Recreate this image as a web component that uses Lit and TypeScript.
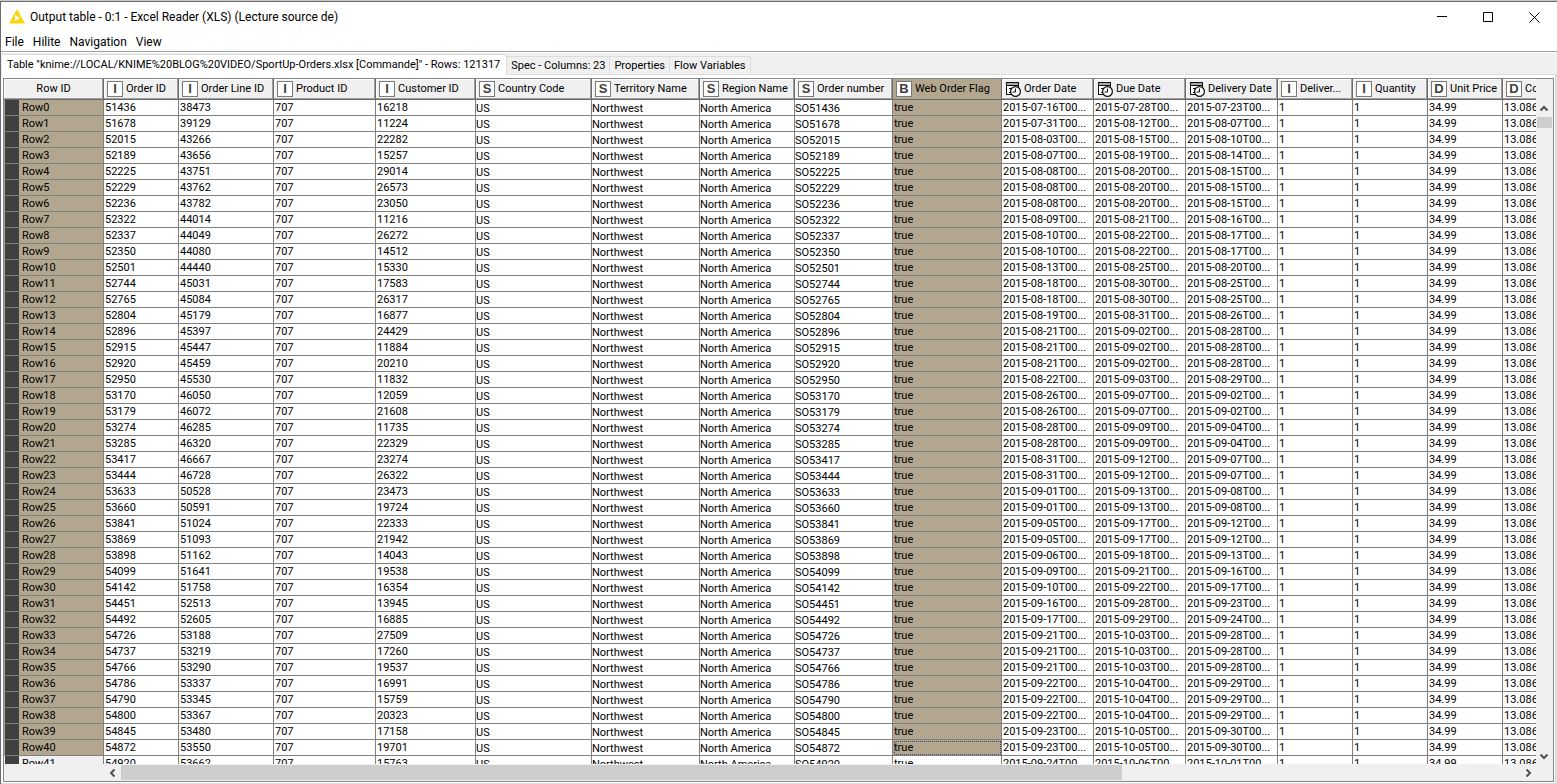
import { LitElement, html, svg, css, nothing } from "lit";
import { customElement } from "lit/decorators.js";
import { classMap } from "lit/directives/class-map.js";

type Kind = "int" | "string" | "bool" | "double" | "date";

interface Column {
  label: string;
  kind: Kind;
  width: number;
  selected?: boolean;
}

const LETTERS: Record<string, string> = { int: "I", string: "S", bool: "B", double: "D" };

const COLUMNS: Column[] = [
  { label: "Order ID", kind: "int", width: 75 },
  { label: "Order Line ID", kind: "int", width: 95 },
  { label: "Product ID", kind: "int", width: 102 },
  { label: "Customer ID", kind: "int", width: 100 },
  { label: "Country Code", kind: "string", width: 116 },
  { label: "Territory Name", kind: "string", width: 108 },
  { label: "Region Name", kind: "string", width: 95 },
  { label: "Order number", kind: "string", width: 98 },
  { label: "Web Order Flag", kind: "bool", width: 109, selected: true },
  { label: "Order Date", kind: "date", width: 92 },
  { label: "Due Date", kind: "date", width: 92 },
  { label: "Delivery Date", kind: "date", width: 92 },
  { label: "Deliver...", kind: "int", width: 75 },
  { label: "Quantity", kind: "int", width: 75 },
  { label: "Unit Price", kind: "double", width: 75 },
  { label: "Co", kind: "double", width: 75 },
];

// order id, order line id, customer id, order date, due date, delivery date
const ORDERS = `
51436 38473 16218 07-16 07-28 07-23
51678 39129 11224 07-31 08-12 08-07
52015 43266 22282 08-03 08-15 08-10
52189 43656 15257 08-07 08-19 08-14
52225 43751 29014 08-08 08-20 08-15
52229 43762 26573 08-08 08-20 08-15
52236 43782 23050 08-08 08-20 08-15
52322 44014 11216 08-09 08-21 08-16
52337 44049 26272 08-10 08-22 08-17
52350 44080 14512 08-10 08-22 08-17
52501 44440 15330 08-13 08-25 08-20
52744 45031 17583 08-18 08-30 08-25
52765 45084 26317 08-18 08-30 08-25
52804 45179 16877 08-19 08-31 08-26
52896 45397 24429 08-21 09-02 08-28
52915 45447 11884 08-21 09-02 08-28
52920 45459 20210 08-21 09-02 08-28
52950 45530 11832 08-22 09-03 08-29
53170 46050 12059 08-26 09-07 09-02
53179 46072 21608 08-26 09-07 09-02
53274 46285 11735 08-28 09-09 09-04
53285 46320 22329 08-28 09-09 09-04
53417 46667 23274 08-31 09-12 09-07
53444 46728 26322 08-31 09-12 09-07
53633 50528 23473 09-01 09-13 09-08
53660 50591 19724 09-01 09-13 09-08
53841 51024 22333 09-05 09-17 09-12
53869 51093 21942 09-05 09-17 09-12
53898 51162 14043 09-06 09-18 09-13
54099 51641 19538 09-09 09-21 09-16
54142 51758 16354 09-10 09-22 09-17
54451 52513 13945 09-16 09-28 09-23
54492 52605 16885 09-17 09-29 09-24
54726 53188 27509 09-21 10-03 09-28
54737 53219 17260 09-21 10-03 09-28
54766 53290 19537 09-21 10-03 09-28
54786 53337 16991 09-22 10-04 09-29
54790 53345 15759 09-22 10-04 09-29
54800 53367 20323 09-22 10-04 09-29
54845 53480 17158 09-23 10-05 09-30
54872 53550 19701 09-23 10-05 09-30
54920 53662 15763 09-24 10-06 10-01`
  .trim()
  .split("\n")
  .map((line) => line.split(" "));

const LAST_SELECTED = 40;

const day = (value: string) => `2015-${value}T00...`;

const toCells = ([order, line, customer, ordered, due, delivered]: string[]) => [
  order, line, "707", customer, "US", "Northwest", "North America", `SO${order}`, "true",
  day(ordered), day(due), day(delivered), "1", "1", "34.99", "13.086",
];

const CHEVRONS: Record<string, string> = {
  up: "M4.5 10.5 8 7l3.5 3.5",
  down: "M4.5 6.5 8 10l3.5-3.5",
  left: "M9.5 4.5 6 8l3.5 3.5",
  right: "M6.5 4.5 10 8l-3.5 3.5",
};

@customElement("type-icon")
class TypeIcon extends LitElement {
  static properties = { kind: {} };
  declare kind: Kind;

  static styles = css`
    :host { display: block; flex: none; width: 16px; height: 16px; }
    .box {
      box-sizing: border-box; width: 16px; height: 16px; border: 1px solid #7a7a7a;
      background: #fff; color: #404040; text-align: center;
      font: bold 13px/14px "Liberation Sans", Arial, sans-serif;
    }
    svg { display: block; }
  `;

  render() {
    if (this.kind !== "date") return html`<div class="box">${LETTERS[this.kind]}</div>`;
    return html`<svg width="16" height="16" viewBox="0 0 16 16" aria-hidden="true">
      ${svg`<path d="M1.5 1.5h12v12H1.5z" fill="#fff" stroke="#111"/>
      <path d="M1 1h13v3H1z" fill="#a8a8a8"/>
      <path d="M1 1.5h13M1 4.5h13M1.5 1v13M13.5 1v5" stroke="#111" fill="none"/>
      <path d="M4 7.5h2.5v4M4 11.5h3" stroke="#111" fill="none"/>
      <circle cx="10.5" cy="10.5" r="4.9" fill="#fff" stroke="#111" stroke-width="1.2"/>
      <path d="M10.5 7.5v3.5h-3" stroke="#111" fill="none"/>`}
    </svg>`;
  }
}

@customElement("app-root")
class AppRoot extends LitElement {
  static styles = css`
    :host {
      display: flex; flex-direction: column; box-sizing: border-box; height: 100vh;
      border-top: 1px solid #c8c8c8; background: #f0f0f0; color: #000;
      font: 11px/14px Roboto, "Liberation Sans", sans-serif;
    }
    button {
      margin: 0; padding: 0; border: 0; background: none; color: inherit; font: inherit;
    }
    svg { display: block; }
    .window {
      display: flex; flex-direction: column; flex: 1; min-height: 0; overflow: hidden;
      border-top: 1px solid #6b6b6b; border-left: 1px solid #6b6b6b;
    }
    .titlebar { display: flex; align-items: center; height: 30px; padding-left: 8px; background: #fff; }
    .title { flex: 1; margin: 0 0 0 5px; font-size: 12px; font-weight: normal; }
    .controls { display: flex; }
    .controls button { display: grid; place-items: center; width: 46px; height: 30px; }
    .menubar {
      display: flex; gap: 9px; height: 19px; padding-left: 4px; background: #fff;
      border-bottom: 1px solid #a0a0a0; font-size: 12px;
    }
    .tabs {
      display: flex; align-items: flex-end; height: 22px; padding-left: 1px;
      border-top: 1px solid #fff; box-shadow: inset 0 -1px #dcdcdc;
    }
    .tab {
      height: 19px; padding: 1px 4px 0; border: 1px solid #dcdcdc; border-left: 0; white-space: nowrap;
    }
    .tab.active {
      height: 21px; padding: 0 6px 0 5px; background: #fff; border-bottom-color: #fff;
    }
    .panel {
      display: flex; flex: 1; min-height: 0; padding: 3px 1px 1px 2px; background: #fff;
      border: solid #dcdcdc; border-width: 0 2px 1px 0;
    }
    .frame {
      display: grid; flex: 1; min-width: 0; border: 1px solid #828790; background: #f0f0f0;
      grid-template-columns: minmax(0, 1fr) 17px;
      grid-template-rows: 21px minmax(0, 1fr) 17px;
    }
    .view { grid-row: 1 / 3; overflow: hidden; }
    table { width: 0; table-layout: fixed; border-collapse: separate; border-spacing: 0; }
    th, td {
      box-sizing: border-box; padding: 0 0 0 1px; overflow: hidden; white-space: nowrap;
      text-align: left; font-weight: normal; border: solid #808080; border-width: 0 1px 1px 0;
    }
    thead th {
      height: 21px; padding: 0 1px 0 3px; border-color: #696969; background: #f0f0f0;
      box-shadow: inset -1px -1px #a0a0a0, inset 1px 1px #fff;
    }
    thead th.corner { padding: 0; text-align: center; }
    thead th.selected { background: #b2a68e; box-shadow: none; }
    .heading { display: flex; align-items: center; gap: 3px; }
    tbody th, tbody td { height: 16px; line-height: 15px; }
    tbody td { background: #fff; }
    tbody td.string { padding: 2px 0 0; line-height: 13px; }
    tbody td.picked, tbody th.picked { background: #b2a68e; }
    tbody td.focused { outline: 1px dotted #404a70; outline-offset: -2px; }
    tbody th { padding-left: 1px; }
    .rowid { display: flex; }
    .rowid::before { content: ""; width: 14px; margin-right: 3px; background: #404040; }
    .vbar { grid-column: 2; grid-row: 2; display: flex; flex-direction: column; }
    .hbar { grid-column: 1; grid-row: 3; display: flex; margin: 1px 0 0 101px; }
    .arrow { width: 16px; height: 16px; flex: none; }
    .track { flex: 1; display: flex; }
    .vbar .track { flex-direction: column; padding: 1px 1px 0; }
    .hbar .track { padding-bottom: 1px; }
    .thumb { background: #cdcdcd; }
    .vbar .thumb { height: 11px; }
    .hbar .thumb { width: 1001px; max-width: 90%; }
  `;

  private arrow(direction: string) {
    return html`<button class="arrow" aria-label="Scroll ${direction}">
      <svg width="16" height="16" viewBox="0 0 16 16">
        <path d=${CHEVRONS[direction]} fill="none" stroke="#505050" stroke-width="2" />
      </svg>
    </button>`;
  }

  private row(order: string[], index: number) {
    const picked = index <= LAST_SELECTED;
    return html`<tr>
      <th scope="row" class=${picked ? "picked" : nothing}><div class="rowid">Row${index}</div></th>
      ${toCells(order).map((value, i) => {
        const column = COLUMNS[i];
        const classes = {
          string: column.kind === "string",
          picked: picked && !!column.selected,
          focused: index === LAST_SELECTED && !!column.selected,
        };
        return html`<td class=${classMap(classes)}>${value}</td>`;
      })}
    </tr>`;
  }

  render() {
    return html`<div class="window">
      <header class="titlebar">
        <svg width="16" height="16" viewBox="0 0 16 16" aria-hidden="true">
          <path d="M8 0 16 14.5H0z" fill="#fcd40c" />
          <path d="M6 6v6L11 9z" fill="#fff" />
        </svg>
        <h1 class="title">Output table - 0:1 - Excel Reader (XLS) (Lecture source de)</h1>
        <div class="controls">
          <button aria-label="Minimize">
            <svg width="11" height="11"><path d="M0 4.5h10" stroke="#000" /></svg>
          </button>
          <button aria-label="Maximize">
            <svg width="11" height="11"><path d="M.5.5h9v9h-9z" fill="none" stroke="#000" /></svg>
          </button>
          <button aria-label="Close">
            <svg width="11" height="11"><path d="M.5.5l10 10M10.5.5l-10 10" stroke="#000" /></svg>
          </button>
        </div>
      </header>
      <nav class="menubar">
        ${["File", "Hilite", "Navigation", "View"].map((name) => html`<button>${name}</button>`)}
      </nav>
      <div class="tabs" role="tablist">
        <button class="tab active" role="tab" aria-selected="true">Table "knime://LOCAL/KNIME%20BLOG%20VIDEO/SportUp-Orders.xlsx [Commande]" - Rows: 121317</button>
        ${["Spec - Columns: 23", "Properties", "Flow Variables"].map(
          (name) => html`<button class="tab" role="tab" aria-selected="false">${name}</button>`,
        )}
      </div>
      <main class="panel">
        <div class="frame">
          <div class="view">
            <table>
              <colgroup>
                <col style="width: 100px" />
                ${COLUMNS.map((column) => html`<col style="width: ${column.width}px" />`)}
              </colgroup>
              <thead>
                <tr>
                  <th scope="col" class="corner">Row ID</th>
                  ${COLUMNS.map(
                    (column) => html`<th scope="col" class=${column.selected ? "selected" : nothing}>
                      <div class="heading"><type-icon .kind=${column.kind}></type-icon>${column.label}</div>
                    </th>`,
                  )}
                </tr>
              </thead>
              <tbody>${ORDERS.map((order, index) => this.row(order, index))}</tbody>
            </table>
          </div>
          <div class="vbar">
            ${this.arrow("up")}
            <div class="track"><div class="thumb"></div></div>
            ${this.arrow("down")}
          </div>
          <div class="hbar">
            ${this.arrow("left")}
            <div class="track"><div class="thumb"></div></div>
            ${this.arrow("right")}
          </div>
        </div>
      </main>
    </div>`;
  }
}
